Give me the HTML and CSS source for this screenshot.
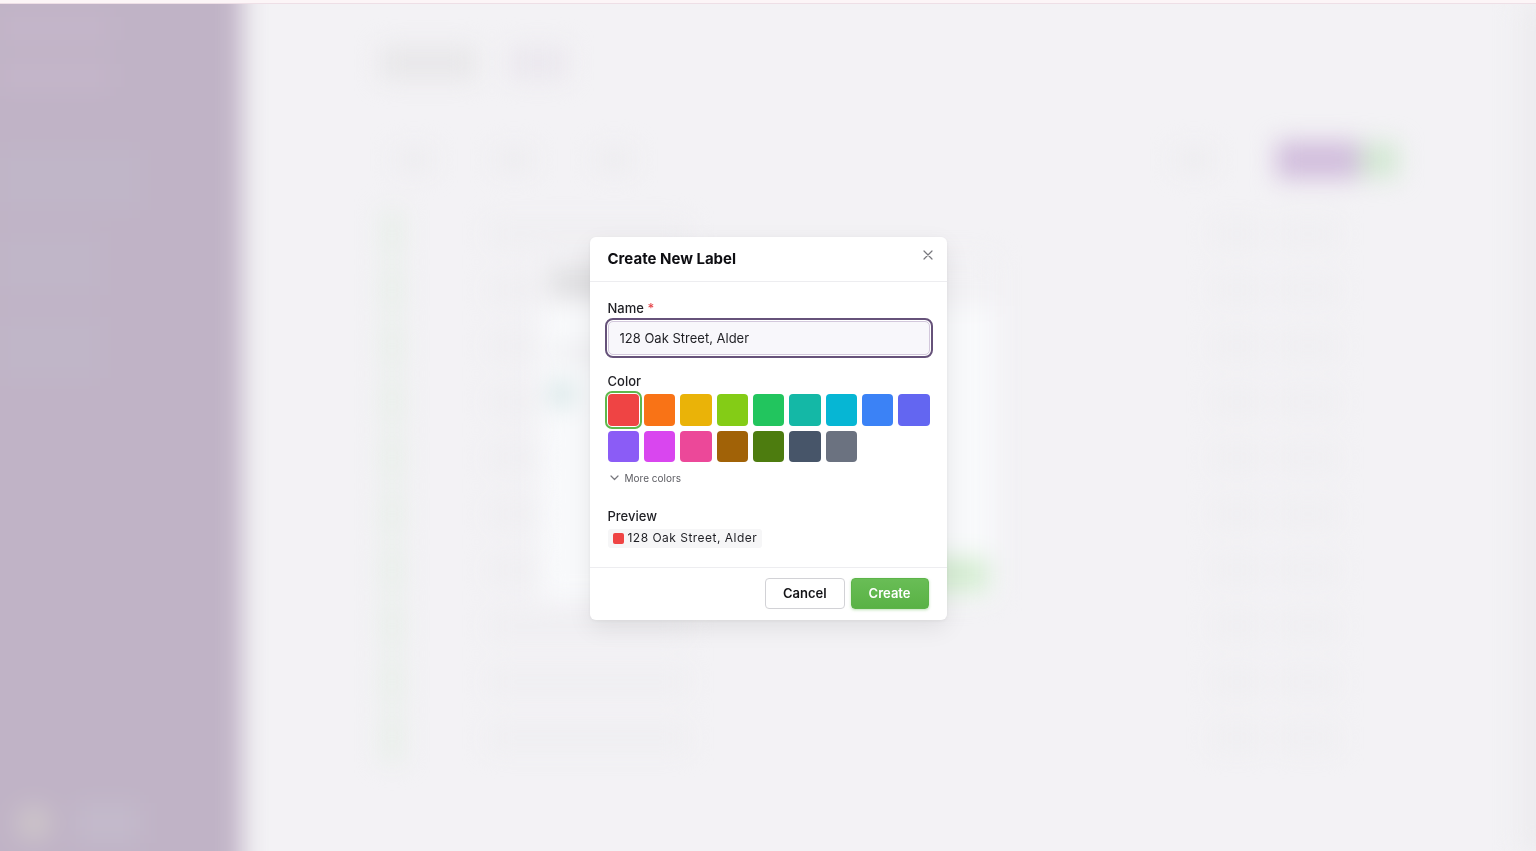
FILE: index.html
```
<!DOCTYPE html>
<html lang="en">

<head>
    <meta charset="UTF-8">
    <meta name="viewport" content="width=device-width, initial-scale=1.0">
    <title>Labels</title>
    <link rel="stylesheet" href="styles.css">
</head>

<body>

    <div class="topbar"></div>

    <!-- App behind the dialog -->
    <div class="app" aria-hidden="true">
        <div class="sidebar">
            <div class="side-group"><i></i><i></i></div>
            <div class="side-group side-cool"><i></i><i></i><i></i></div>
            <div class="side-user"><b></b><i></i></div>
        </div>

        <div class="main">
            <div class="title-row"><i></i><i></i></div>

            <div class="toolbar">
                <i></i><i></i><i></i>
                <i class="push"></i>
                <b class="purple"></b><b class="green"></b>
            </div>

            <div class="rows">
                <div class="row"><b></b><i></i><i></i><i></i></div>
                <div class="row"><b></b><i></i><i></i><i></i></div>
                <div class="row"><b></b><i></i><i></i><i></i></div>
                <div class="row"><b></b><i></i><i></i><i></i></div>
                <div class="row"><b></b><i></i><i></i><i></i></div>
                <div class="row"><b></b><i></i><i></i><i></i></div>
                <div class="row"><b></b><i></i><i></i><i></i></div>
                <div class="row"><b></b><i></i><i></i><i></i></div>
                <div class="row"><b></b><i></i><i></i><i></i></div>
                <div class="row"><b></b><i></i><i></i><i></i></div>
            </div>
        </div>

        <div class="scroll"></div>

        <div class="sheet">
            <div class="sheet-head"><i></i></div>
            <div class="sheet-body"><i></i><b></b></div>
            <div class="sheet-foot"><b></b></div>
        </div>
    </div>

    <!-- Dialog -->
    <div class="overlay">
        <form class="modal" role="dialog" aria-labelledby="modal-title">
            <header class="modal-head">
                <h1 id="modal-title">Create New Label</h1>
                <button class="close" type="button" aria-label="Close">
                    <svg viewBox="0 0 10 10" width="10" height="10"><path d="M1 1l8 8M9 1L1 9"/></svg>
                </button>
            </header>

            <div class="modal-body">
                <div class="field">
                    <label class="label" for="name">Name <span class="req">*</span></label>
                    <input class="text" id="name" type="text" value="128 Oak Street, Alder">
                </div>

                <fieldset class="field">
                    <legend class="label">Color</legend>
                    <div class="swatches">
                        <input class="swatch red" type="radio" name="color" aria-label="Red" checked>
                        <input class="swatch orange" type="radio" name="color" aria-label="Orange">
                        <input class="swatch yellow" type="radio" name="color" aria-label="Yellow">
                        <input class="swatch lime" type="radio" name="color" aria-label="Lime">
                        <input class="swatch emerald" type="radio" name="color" aria-label="Green">
                        <input class="swatch teal" type="radio" name="color" aria-label="Teal">
                        <input class="swatch cyan" type="radio" name="color" aria-label="Cyan">
                        <input class="swatch blue" type="radio" name="color" aria-label="Blue">
                        <input class="swatch indigo" type="radio" name="color" aria-label="Indigo">
                        <input class="swatch violet" type="radio" name="color" aria-label="Violet">
                        <input class="swatch fuchsia" type="radio" name="color" aria-label="Fuchsia">
                        <input class="swatch pink" type="radio" name="color" aria-label="Pink">
                        <input class="swatch brown" type="radio" name="color" aria-label="Brown">
                        <input class="swatch olive" type="radio" name="color" aria-label="Olive">
                        <input class="swatch slate" type="radio" name="color" aria-label="Slate">
                        <input class="swatch gray" type="radio" name="color" aria-label="Gray">
                    </div>
                    <button class="more" type="button">
                        <svg viewBox="0 0 9 6" width="9" height="6"><path d="M1 1l3.5 3.5L8 1"/></svg>
                        More colors
                    </button>
                </fieldset>

                <div class="field">
                    <div class="label">Preview</div>
                    <div class="chip"><span class="chip-dot"></span>128 Oak Street, Alder</div>
                </div>
            </div>

            <footer class="modal-foot">
                <button class="btn" type="button">Cancel</button>
                <button class="btn btn-primary" type="submit">Create</button>
            </footer>
        </form>
    </div>

</body>
</html>
```

FILE: styles.css
```
:root {
    --side:   #c0b3c6;
    --page:   #f3f2f5;
    --line:   #ededf0;
    --text:   #1f1f24;
    --green:  #5fb84c;
    --purple: #66527a;
}

* {
    box-sizing: border-box;
    margin: 0;
    padding: 0;
}

body {
    display: flex;
    flex-direction: column;
    height: 100vh;
    overflow: hidden;
    background: var(--page);
    color: var(--text);
    font-family: Inter, sans-serif;
    font-size: 13px;
    line-height: 16px;
}

button,
input {
    font: inherit;
    color: inherit;
}

.topbar {
    flex: none;
    position: relative;
    z-index: 1;
    height: 4px;
    background: #fcf5f7;
    border-bottom: 1px solid #eedfe6;
}

/* ── App behind the dialog ── */
.app {
    flex: 1;
    min-height: 0;
    display: flex;
    position: relative;
    filter: blur(12px);
}

.app i,
.app b {
    display: block;
}

/* the spread shadow keeps the blur from fading at the window edges */
.sidebar {
    flex: none;
    width: 242px;
    display: flex;
    flex-direction: column;
    gap: 50px;
    background: var(--side);
    box-shadow: -40px -40px 0 var(--side), -40px 40px 0 var(--side), 0 -40px 0 var(--side), 0 40px 0 var(--side);
}

.side-group {
    display: flex;
    flex-direction: column;
    gap: 24px;
    padding-top: 12px;
}

.side-group i {
    width: 110px;
    height: 24px;
    background: #c5b6ca;
}

.side-cool i {
    width: 100px;
    height: 60px;
    background: #c0b6c8;
}

.side-cool i:first-child {
    width: 140px;
}

.side-user {
    display: flex;
    align-items: center;
    gap: 24px;
    margin-top: auto;
    padding: 0 16px 8px;
}

.side-user b {
    width: 36px;
    height: 36px;
    border-radius: 50%;
    background: #cdc5ca;
}

.side-user i {
    width: 64px;
    height: 40px;
    background: #c3bacb;
}

.main {
    flex: 1;
    display: flex;
    flex-direction: column;
    padding: 42px 116px 0 138px;
}

.title-row {
    display: flex;
    gap: 32px;
}

.title-row i {
    width: 96px;
    height: 34px;
    background: #e8e7e9;
}

.title-row i + i {
    width: 60px;
    background: #ebe8ee;
}

.toolbar {
    display: flex;
    align-items: center;
    height: 40px;
    margin-top: 60px;
    padding-left: 16px;
    gap: 64px;
}

.toolbar i {
    width: 36px;
    height: 24px;
    background: #edecef;
}

.toolbar .push {
    margin-left: auto;
}

.toolbar .purple {
    width: 84px;
    height: 38px;
    background: #d1bddc;
}

.toolbar .green {
    width: 38px;
    height: 34px;
    margin: 0 4px 0 -64px;
    background: #d2e8d2;
}

.rows {
    margin-top: 26px;
}

.row {
    display: flex;
    align-items: center;
    height: 56px;
}

.row b {
    width: 24px;
    height: 48px;
    background: #e9efea;
}

.row i {
    width: 50px;
    height: 24px;
    margin-left: auto;
    background: #efeef1;
}

.row i:nth-child(2) {
    width: 200px;
    margin-left: 84px;
}

.row i:last-child {
    width: 60px;
    margin: 0 64px 0 16px;
}

.scroll {
    flex: none;
    width: 18px;
    background: #edecef;
    box-shadow: 18px 0 0 #edecef, 36px 0 0 #edecef;
}

/* lower dialog, stacked under the open one */
.sheet {
    position: absolute;
    top: 50%;
    left: 50%;
    width: 456px;
    transform: translate(-50%, -50%);
    display: flex;
    flex-direction: column;
    height: 344px;
    background: #f8f9fb;
}

.sheet-head {
    height: 50px;
    padding: 12px;
    background: #f2f1f4;
}

.sheet-head i {
    width: 150px;
    height: 28px;
    background: #dddddf;
}

.sheet-body {
    flex: 1;
    padding: 40px 12px;
}

.sheet-body i {
    width: 120px;
    height: 14px;
    background: #ececef;
}

.sheet-body b {
    width: 20px;
    height: 24px;
    margin-top: 22px;
    background: #cfe2e2;
}

.sheet-foot {
    display: flex;
    justify-content: flex-end;
    padding: 8px;
}

.sheet-foot b {
    width: 76px;
    height: 34px;
    background: #d3ecd0;
}

/* ── Overlay ── */
.overlay {
    position: fixed;
    inset: 6px 0 0;
    display: flex;
    align-items: center;
    justify-content: center;
}

.modal {
    width: 357px;
    background: #fff;
    border-radius: 6px;
    box-shadow: 0 8px 24px rgba(0, 0, 0, 0.08), 0 1px 4px rgba(0, 0, 0, 0.06);
}

.modal-head {
    display: flex;
    justify-content: space-between;
    padding: 12px 14px 12px 18px;
    border-bottom: 1px solid var(--line);
}

h1 {
    color: #0e0e12;
    font-size: 15px;
    font-weight: 700;
    line-height: 20px;
}

.close {
    display: flex;
    align-items: center;
    height: 12px;
    border: 0;
    background: none;
    cursor: pointer;
}

.close svg,
.more svg {
    fill: none;
    stroke: #77777d;
    stroke-width: 1.2;
    stroke-linecap: round;
    stroke-linejoin: round;
}

.modal-body {
    display: flex;
    flex-direction: column;
    gap: 18px;
    padding: 18px 17px 19px 18px;
}

.field {
    min-width: 0;
    border: 0;
}

.label {
    display: block;
    margin-bottom: 5px;
    font-weight: 500;
}

.req {
    color: #e5484d;
}

.text {
    display: block;
    width: 100%;
    height: 34px;
    padding: 0 11px;
    border: 1px solid #d3c8dc;
    border-radius: 5px;
    background: #f8f7fb;
    outline: 2px solid var(--purple);
    outline-offset: 1px;
}

/* ── Swatches ── */
.swatches {
    display: grid;
    grid-template-columns: repeat(9, 1fr);
    gap: 5px;
}

.swatch {
    appearance: none;
    width: 100%;
    aspect-ratio: 1;
    border-radius: 4px;
    cursor: pointer;
}

.swatch:checked {
    outline: 2px solid var(--green);
    outline-offset: 1px;
}

.red     { background: #ef4444; }
.orange  { background: #f97316; }
.yellow  { background: #eab308; }
.lime    { background: #84cc16; }
.emerald { background: #22c55e; }
.teal    { background: #14b8a6; }
.cyan    { background: #06b6d4; }
.blue    { background: #3b82f6; }
.indigo  { background: #6366f1; }
.violet  { background: #8b5cf6; }
.fuchsia { background: #d946ef; }
.pink    { background: #ec4899; }
.brown   { background: #a16207; }
.olive   { background: #4d7c0f; }
.slate   { background: #475569; }
.gray    { background: #6b7280; }

.more {
    display: flex;
    align-items: center;
    gap: 6px;
    height: 24px;
    margin-top: 4px;
    padding: 0 2px;
    border: 0;
    background: none;
    color: #5c5c62;
    font-size: 10px;
    cursor: pointer;
}

/* ── Preview ── */
.chip {
    display: inline-flex;
    align-items: center;
    gap: 4px;
    height: 19px;
    padding: 0 5px;
    border-radius: 3px;
    background: #f6f6f7;
    font-size: 12px;
    letter-spacing: 0.04em;
    vertical-align: top;
}

.chip-dot {
    width: 11px;
    height: 11px;
    border-radius: 2px;
    background: #ef4444;
}

/* ── Footer ── */
.modal-foot {
    display: flex;
    justify-content: flex-end;
    gap: 6px;
    padding: 10px 18px 11px;
    border-top: 1px solid var(--line);
}

.btn {
    height: 31px;
    padding: 0 17px;
    border: 1px solid #d2d2d6;
    border-radius: 4px;
    background: #fff;
    color: #131316;
    font-weight: 600;
    cursor: pointer;
}

.btn-primary {
    border-color: #5cb449;
    background: linear-gradient(#69bd56, #59b245);
    box-shadow: 0 1px 3px rgba(95, 184, 76, 0.4);
    color: #fff;
}
```
